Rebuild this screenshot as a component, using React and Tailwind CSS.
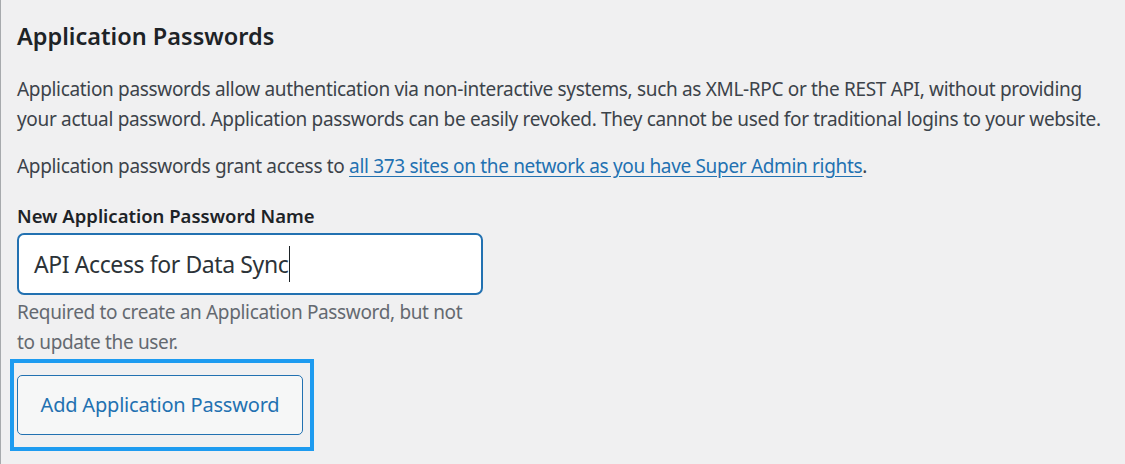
const App = () => {
    return (
        <div
            className="min-h-screen bg-[#f0f0f1] border-l border-[#a7aaad] pl-4 pt-[17px] text-[#3c434a]"
            style={{ fontFamily: '"Noto Sans", "Open Sans", sans-serif' }}
        >
            <h2 className="text-[23.5px] font-semibold text-[#1d2327] leading-[38px]">
                Application Passwords
            </h2>

            <p className="mt-[19px] text-[19px] leading-[30px] whitespace-nowrap tracking-[-0.33px]">
                Application passwords allow authentication via non-interactive systems, such as XML-RPC or the REST API, without providing
                <br />
                your actual password. Application passwords can be easily revoked. They cannot be used for traditional logins to your website.
            </p>

            <p className="mt-[17px] text-[19px] leading-[30px] whitespace-nowrap tracking-[-0.33px]">
                Application passwords grant access to{" "}
                <a href="#" className="text-[#2271b1] underline underline-offset-[3px]">
                    all 373 sites on the network as you have Super Admin rights
                </a>
                .
            </p>

            <div className="mt-[21px] flex flex-col items-start">
                <label className="text-[18.5px] font-semibold text-[#1d2327] leading-[28px]">
                    New Application Password Name
                </label>

                <div className="mt-[3px] w-[466px] h-[62px] bg-white border-2 border-[#2271b1] rounded-[7px] flex items-center pl-[15px]">
                    <span className="text-[23px] text-[#2c3338] tracking-[-0.4px]">API Access for Data Sync</span>
                    <span className="w-px h-[36px] bg-[#1d2327] ml-[1px]"></span>
                </div>

                <p className="mt-[2px] text-[19px] leading-[30px] text-[#646970] tracking-[-0.35px]">
                    Required to create an Application Password, but not
                    <br />
                    to update the user.
                </p>

                <div className="-ml-[7px] mt-[2px] border-[4px] border-[#1d9bf0] pt-[12px] pb-[12px] pl-[3px] pr-[7px]">
                    <button className="h-[60px] w-[286px] bg-[#f6f7f7] border border-[#2271b1] rounded-[5px] text-[#2271b1] text-[20px] tracking-[-0.2px]">
                        Add Application Password
                    </button>
                </div>
            </div>
        </div>
    );
};

export default App;
